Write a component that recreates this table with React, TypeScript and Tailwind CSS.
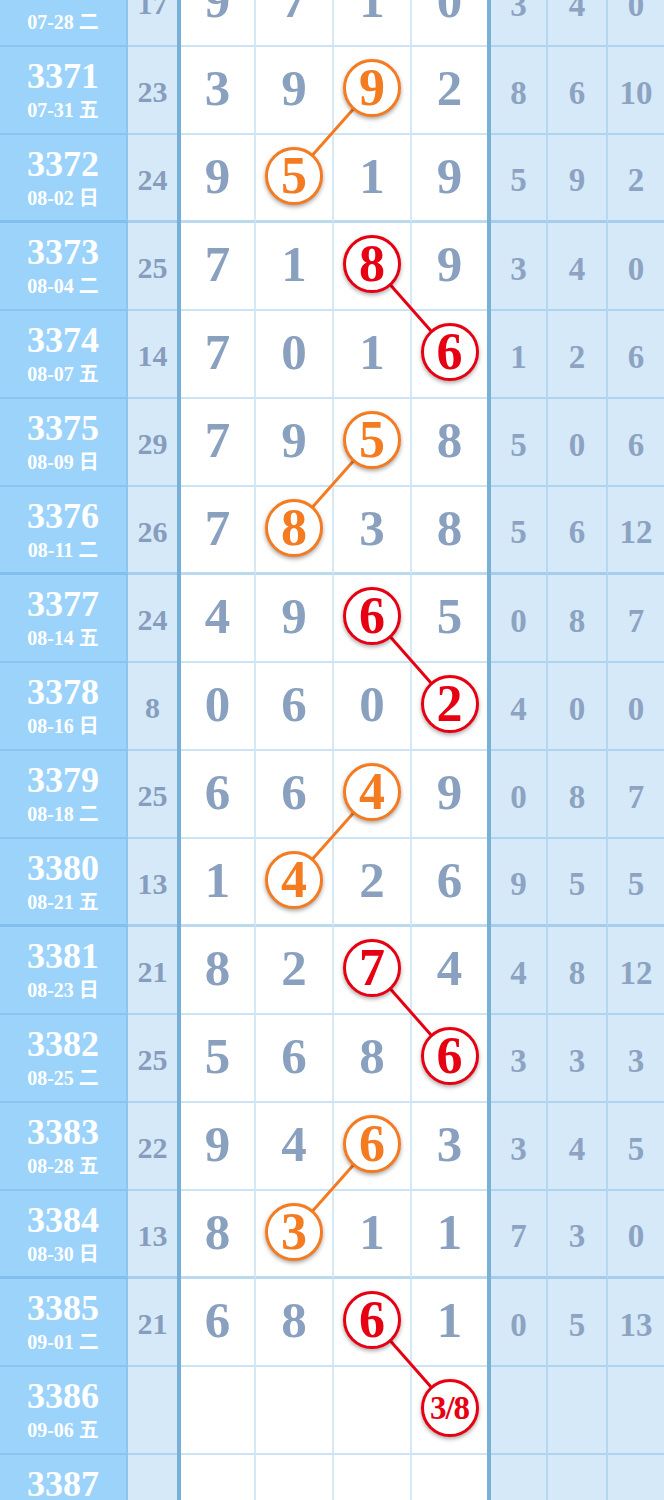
import React from "react";

type Tone = "orange" | "red";

type Row = {
  no: string;
  date: string;
  sum: string;
  d: string[];
  r: string[];
  hit?: number;
  tone?: Tone;
  mark?: string;
};

const rows: Row[] = [
  { no: "3370", date: "07-28 二", sum: "17", d: ["9", "7", "1", "0"], r: ["3", "4", "0"] },
  { no: "3371", date: "07-31 五", sum: "23", d: ["3", "9", "9", "2"], r: ["8", "6", "10"], hit: 2, tone: "orange" },
  { no: "3372", date: "08-02 日", sum: "24", d: ["9", "5", "1", "9"], r: ["5", "9", "2"], hit: 1, tone: "orange" },
  { no: "3373", date: "08-04 二", sum: "25", d: ["7", "1", "8", "9"], r: ["3", "4", "0"], hit: 2, tone: "red" },
  { no: "3374", date: "08-07 五", sum: "14", d: ["7", "0", "1", "6"], r: ["1", "2", "6"], hit: 3, tone: "red" },
  { no: "3375", date: "08-09 日", sum: "29", d: ["7", "9", "5", "8"], r: ["5", "0", "6"], hit: 2, tone: "orange" },
  { no: "3376", date: "08-11 二", sum: "26", d: ["7", "8", "3", "8"], r: ["5", "6", "12"], hit: 1, tone: "orange" },
  { no: "3377", date: "08-14 五", sum: "24", d: ["4", "9", "6", "5"], r: ["0", "8", "7"], hit: 2, tone: "red" },
  { no: "3378", date: "08-16 日", sum: "8", d: ["0", "6", "0", "2"], r: ["4", "0", "0"], hit: 3, tone: "red" },
  { no: "3379", date: "08-18 二", sum: "25", d: ["6", "6", "4", "9"], r: ["0", "8", "7"], hit: 2, tone: "orange" },
  { no: "3380", date: "08-21 五", sum: "13", d: ["1", "4", "2", "6"], r: ["9", "5", "5"], hit: 1, tone: "orange" },
  { no: "3381", date: "08-23 日", sum: "21", d: ["8", "2", "7", "4"], r: ["4", "8", "12"], hit: 2, tone: "red" },
  { no: "3382", date: "08-25 二", sum: "25", d: ["5", "6", "8", "6"], r: ["3", "3", "3"], hit: 3, tone: "red" },
  { no: "3383", date: "08-28 五", sum: "22", d: ["9", "4", "6", "3"], r: ["3", "4", "5"], hit: 2, tone: "orange" },
  { no: "3384", date: "08-30 日", sum: "13", d: ["8", "3", "1", "1"], r: ["7", "3", "0"], hit: 1, tone: "orange" },
  { no: "3385", date: "09-01 二", sum: "21", d: ["6", "8", "6", "1"], r: ["0", "5", "13"], hit: 2, tone: "red" },
  { no: "3386", date: "09-06 五", sum: "", d: ["", "", "", ""], r: ["", "", ""], hit: 3, tone: "red", mark: "3/8" },
  { no: "3387", date: "09-08 日", sum: "", d: ["", "", "", ""], r: ["", "", ""] },
];

// centres of the four digit columns (x) – used by the connector lines
const colX = [217.5, 294, 372, 449.5];
const ROW_H = 88;

const links: [number, number, Tone][] = [
  [1, 2, "orange"],
  [3, 4, "red"],
  [5, 6, "orange"],
  [7, 8, "red"],
  [9, 10, "orange"],
  [11, 12, "red"],
  [13, 14, "orange"],
  [15, 16, "red"],
];

const toneColor = { orange: "#f47b20", red: "#e60012" };

const serif = "font-['Liberation_Serif','Noto_Sans_CJK_SC',serif] font-bold";

const Ball = ({ value, tone }: { value: string; tone: Tone }) => (
  <div
    className={
      "relative z-10 flex h-[58px] w-[58px] items-center justify-center rounded-full border-[3px] bg-white shadow-[0_2px_4px_rgba(0,0,0,0.35)] " +
      (tone === "orange" ? "border-[#f47b20] text-[#f47b20]" : "border-[#e60012] text-[#e60012]")
    }
  >
    {value.length > 1 ? (
      <span className="text-[33px] leading-[33px] tracking-[-1px]">{value}</span>
    ) : (
      <span className="text-[52px] leading-[52px]">{value}</span>
    )}
  </div>
);

const TableRow = ({ row }: { row: Row }) => {
  const group = Number(row.no) % 4 === 0;
  const line = group ? "border-b-[3px] border-b-[#5aa5d8]/40" : "border-b-2 border-b-[#5aa5d8]/30";
  const vline = "border-r-2 border-r-[#5aa5d8]/25";

  return (
    <div className="flex h-[88px]">
      <div
        className={`flex w-[128px] flex-col items-center justify-center border-r-2 border-r-[#8cc6ee] bg-[#9bd3fb] text-white ${line}`}
      >
        <div className="text-[36px] leading-[34px]">{row.no}</div>
        <div className="mt-[6px] text-[20px] leading-[22px]">{row.date}</div>
      </div>
      <div
        className={`flex w-[49px] items-center justify-center bg-[#d6e9f9] pt-[4px] text-[30px] leading-[30px] text-[#869dbd] ${line}`}
      >
        {row.sum}
      </div>
      <div className="w-[4px] bg-[#78b0d8]" />
      {row.d.map((v, i) => {
        const w = i === 0 || i === 3 ? "w-[75px]" : "w-[78px]";
        const hit = row.hit === i && row.tone;
        return (
          <div
            key={i}
            className={`flex ${w} items-center justify-center bg-white pb-[4px] text-[51px] leading-[50px] text-[#8aa0bf] ${line} ${i < 3 ? vline : ""}`}
          >
            {hit ? <Ball value={row.mark ?? v} tone={row.tone!} /> : v}
          </div>
        );
      })}
      <div className="w-[4px] bg-[#78b0d8]" />
      {row.r.map((v, i) => {
        const w = i === 0 ? "w-[57px]" : i === 1 ? "w-[60px]" : "w-[56px]";
        return (
          <div
            key={i}
            className={`flex ${w} items-center justify-center bg-[#d6e9f9] pt-[5px] text-[33px] leading-[32px] text-[#8da3c2] ${line} ${i < 2 ? vline : ""}`}
          >
            {v}
          </div>
        );
      })}
    </div>
  );
}

export default function App() {
  return (
    <div className={`h-[1500px] w-[664px] overflow-hidden bg-white ${serif}`}>
      <div className="relative mt-[-41px]">
        <svg
          className="pointer-events-none absolute left-0 top-0 z-[5]"
          width={664}
          height={rows.length * ROW_H}
        >
          {links.map(([a, b, tone], k) => (
            <line
              key={k}
              x1={colX[rows[a].hit!]}
              y1={a * ROW_H + 41}
              x2={colX[rows[b].hit!]}
              y2={b * ROW_H + 41}
              stroke={toneColor[tone]}
              strokeWidth={3}
            />
          ))}
        </svg>
        {rows.map((row) => (
          <TableRow key={row.no} row={row} />
        ))}
      </div>
    </div>
  );
}
